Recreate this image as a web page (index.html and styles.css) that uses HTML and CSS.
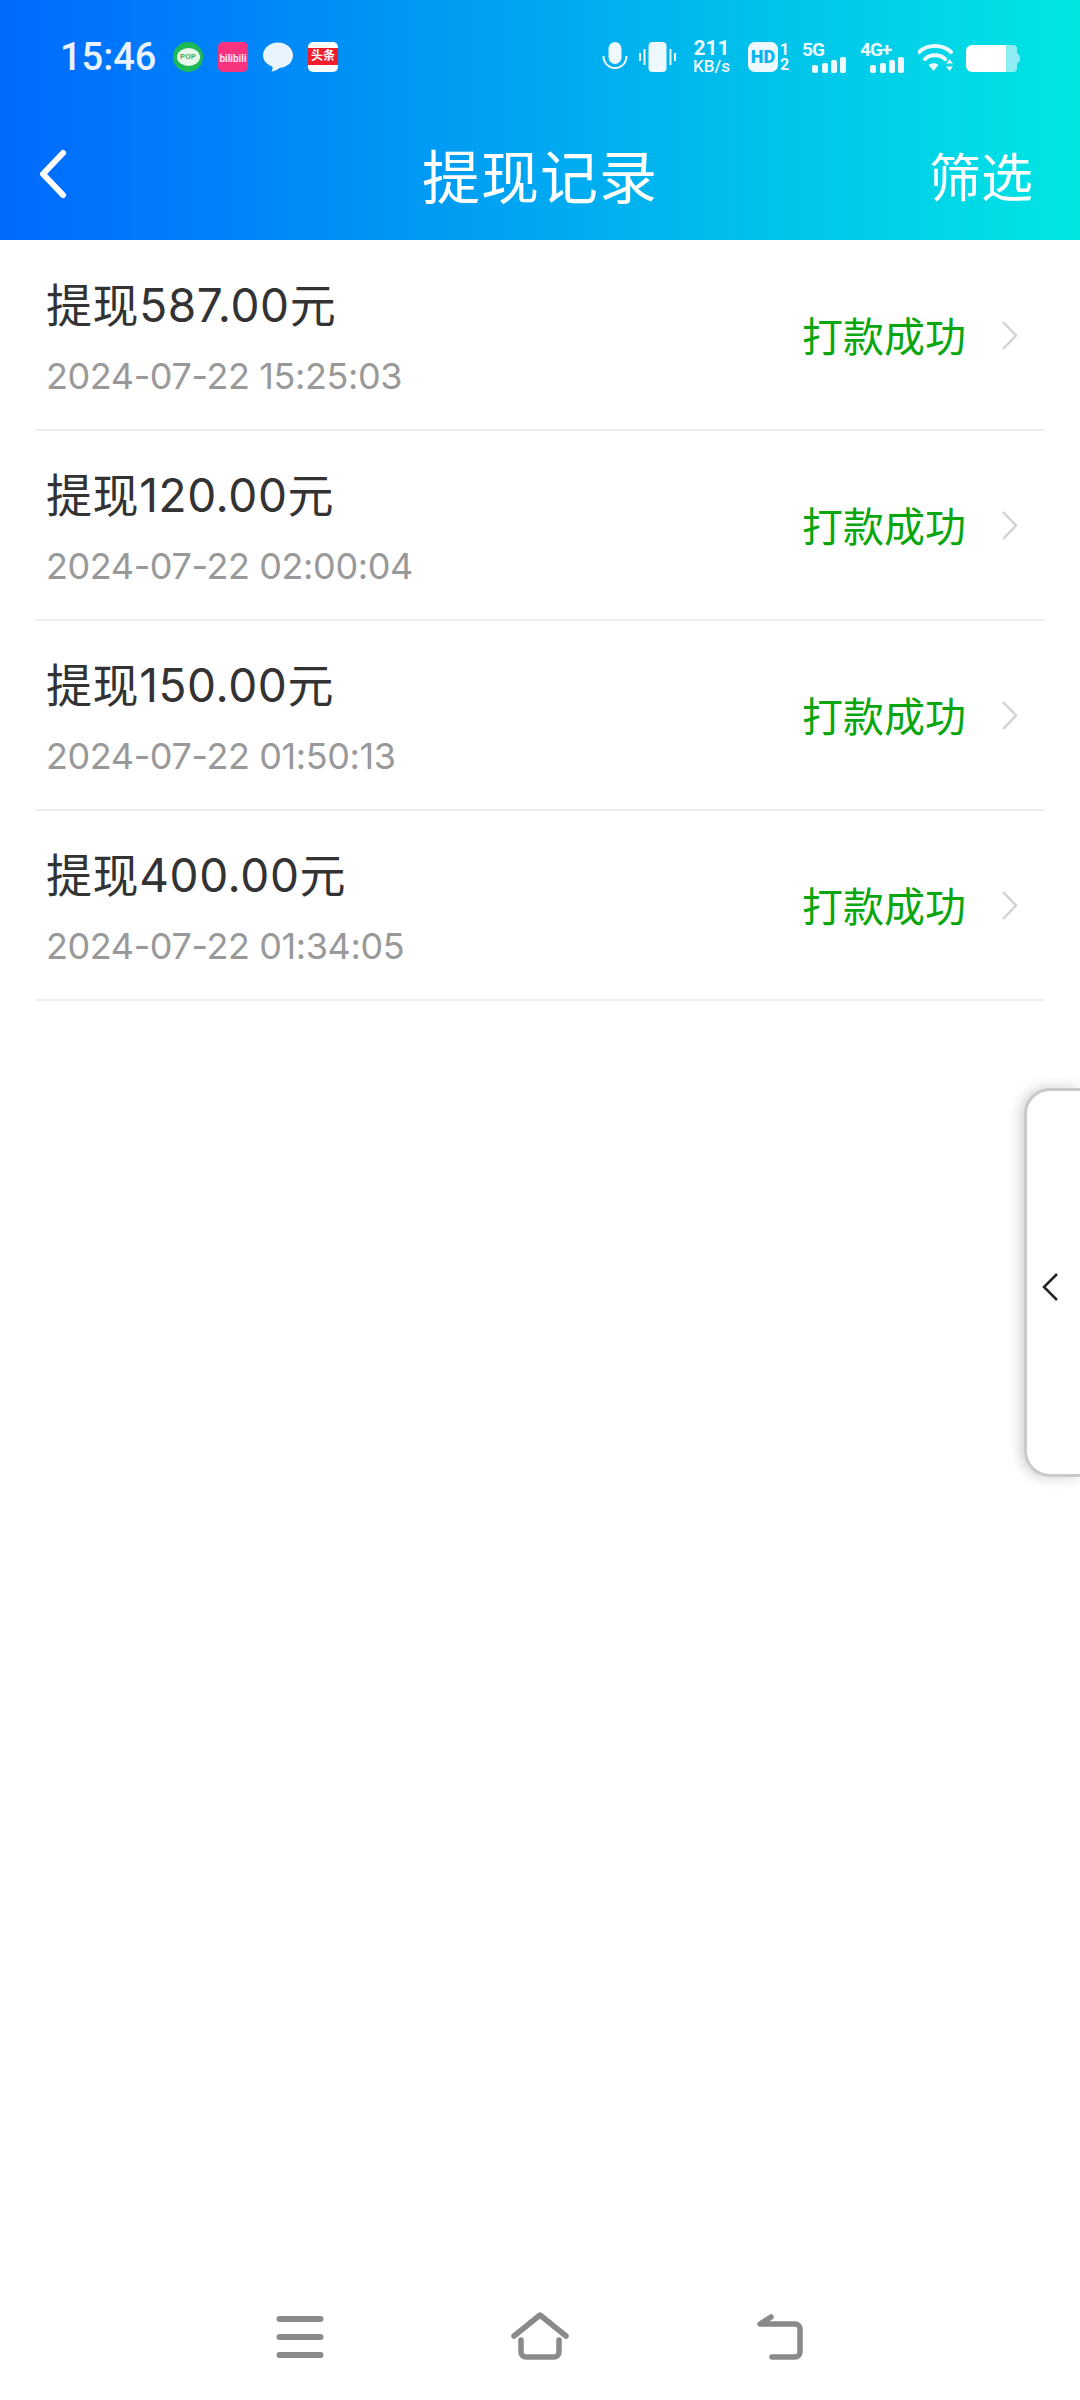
FILE: index.html
```html
<!DOCTYPE html>
<html lang="zh-CN">
<head>
  <meta charset="UTF-8">
  <meta name="viewport" content="width=device-width, initial-scale=1.0">
  <title>提现记录</title>
  <link rel="stylesheet" href="styles.css">
</head>
<body>
  <div class="page">
    <header class="top">
      <!-- Status bar -->
      <div class="status-bar">
        <div class="status-left">
          <span class="clock">15:46</span>
          <div class="notify-icons">
            <div class="notify pop-icon"><span>POP</span></div>
            <div class="notify bili-icon"><span>bilibili</span></div>
            <svg class="notify" viewBox="0 0 30 30">
              <path d="M15 0.500c8.300 0 15 5.700 15 13 0 7.100-6.400 12-13 12.200-2.500 2-5.500 3.300-8.500 4 .9-1.400 1.200-3 1-5C4 22.500 0 18.500 0 13.500 0 6.200 6.700 0.500 15 0.500z" fill="#e9f4ff"/>
            </svg>
            <div class="notify toutiao-icon"><span>头条</span></div>
          </div>
        </div>
        <div class="status-right">
          <svg class="ic-mic" viewBox="0 0 26 30">
            <rect x="6.500" y="0" width="13" height="22" rx="6.500" fill="#eef8ff"/>
            <path d="M1.500 14c0 7 5 12 11.500 12s11.500-5 11.500-12" fill="none" stroke="#eef8ff" stroke-width="2"/>
          </svg>
          <svg class="ic-vibrate" viewBox="0 0 37 30">
            <rect x="9.500" y="0" width="18" height="30" rx="4" fill="#eef8ff"/>
            <path d="M5.500 7v16M1 11v8M31.500 7v16M36 11v8" stroke="#eef8ff" stroke-width="2"/>
          </svg>
          <div class="net-speed">
            <span class="net-num">211</span>
            <span class="net-unit">KB/s</span>
          </div>
          <div class="hd-group">
            <span class="hd-badge">HD</span>
            <div class="sim-nums">
              <span>1</span>
              <span>2</span>
            </div>
          </div>
          <div class="signal">
            <span class="signal-label">5G</span>
            <svg class="signal-bars" viewBox="0 0 44 16">
              <rect x="10" y="8" width="6" height="8" rx="2"/>
              <rect x="20" y="6" width="6" height="10" rx="2"/>
              <rect x="29" y="3" width="6" height="13" rx="2"/>
              <rect x="38" y="0" width="6" height="16" rx="2"/>
            </svg>
          </div>
          <div class="signal">
            <span class="signal-label">4G+</span>
            <svg class="signal-bars" viewBox="0 0 44 16">
              <rect x="10" y="8" width="6" height="8" rx="2"/>
              <rect x="20" y="6" width="6" height="10" rx="2"/>
              <rect x="29" y="3" width="6" height="13" rx="2"/>
              <rect x="38" y="0" width="6" height="16" rx="2"/>
            </svg>
          </div>
          <svg class="ic-wifi" viewBox="0 0 36 30">
            <path d="M2 10c8.500-8 23.500-8 32 0M8 17c5-5 15-5 20 0" fill="none" stroke="#eef8ff" stroke-width="4" stroke-linecap="round" transform="translate(-1 0)"/>
            <path d="M10.500 23c3-2.500 7.500-2.500 10 0L15.500 29z" fill="#eef8ff"/>
            <path d="M31.500 17l3.500 4.500h-7zM31.500 29L28 24.500h7z" fill="#eef8ff"/>
          </svg>
          <svg class="ic-battery" viewBox="0 0 54 27">
            <path d="M40 0h7a4 4 0 0 1 4 4v4.500c1.800.4 3 2 3 5s-1.200 4.600-3 5V23a4 4 0 0 1-4 4h-7z" fill="#8feef5"/>
            <path d="M6 0h34v27H6a6 6 0 0 1-6-6V6a6 6 0 0 1 6-6z" fill="#fff"/>
          </svg>
        </div>
      </div>

      <!-- Title bar -->
      <div class="toolbar">
        <svg class="back-btn" viewBox="0 0 30 50">
          <path d="M25 4L5 25l20 21" fill="none" stroke="#fff" stroke-width="6" stroke-linecap="round" stroke-linejoin="round"/>
        </svg>
        <h1 class="toolbar-title">提现记录</h1>
        <span class="toolbar-action">筛选</span>
      </div>
    </header>

    <main class="record-list">
      <div class="record">
        <div class="record-info">
          <div class="record-title">提现587.00元</div>
          <div class="record-time">2024-07-22 15:25:03</div>
        </div>
        <span class="record-status">打款成功</span>
        <svg class="record-arrow" viewBox="0 0 17 31"><path d="M2 2l13 13.500L2 29" fill="none" stroke="#d2d2d2" stroke-width="2.500"/></svg>
      </div>
      <div class="record">
        <div class="record-info">
          <div class="record-title">提现120.00元</div>
          <div class="record-time">2024-07-22 02:00:04</div>
        </div>
        <span class="record-status">打款成功</span>
        <svg class="record-arrow" viewBox="0 0 17 31"><path d="M2 2l13 13.500L2 29" fill="none" stroke="#d2d2d2" stroke-width="2.500"/></svg>
      </div>
      <div class="record">
        <div class="record-info">
          <div class="record-title">提现150.00元</div>
          <div class="record-time">2024-07-22 01:50:13</div>
        </div>
        <span class="record-status">打款成功</span>
        <svg class="record-arrow" viewBox="0 0 17 31"><path d="M2 2l13 13.500L2 29" fill="none" stroke="#d2d2d2" stroke-width="2.500"/></svg>
      </div>
      <div class="record">
        <div class="record-info">
          <div class="record-title">提现400.00元</div>
          <div class="record-time">2024-07-22 01:34:05</div>
        </div>
        <span class="record-status">打款成功</span>
        <svg class="record-arrow" viewBox="0 0 17 31"><path d="M2 2l13 13.500L2 29" fill="none" stroke="#d2d2d2" stroke-width="2.500"/></svg>
      </div>
    </main>

    <!-- Bottom navigation -->
    <nav class="nav-bar">
      <svg class="nav-icon" viewBox="0 0 60 50">
        <path d="M9.500 7h41M9.500 25h41M9.500 43h41" stroke="#8a8a8a" stroke-width="6" stroke-linecap="round"/>
      </svg>
      <svg class="nav-icon" viewBox="0 0 60 50">
        <path d="M4 24L30 3l26 21" fill="none" stroke="#8a8a8a" stroke-width="5.500" stroke-linecap="round" stroke-linejoin="round"/>
        <path d="M11 28v12a5 5 0 0 0 5 5h28a5 5 0 0 0 5-5V28" fill="none" stroke="#8a8a8a" stroke-width="5.500" stroke-linecap="round"/>
      </svg>
      <svg class="nav-icon" viewBox="0 0 60 50">
        <path d="M21 5l-11 7h35a5 5 0 0 1 5 5v23a5 5 0 0 1-5 5H22" fill="none" stroke="#8a8a8a" stroke-width="5.500" stroke-linecap="round" stroke-linejoin="round"/>
      </svg>
    </nav>
  </div>

  <!-- Floating side drawer -->
  <div class="side-drawer">
    <svg class="side-arrow" viewBox="0 0 17 30">
      <path d="M15 2L2 15l13 13" fill="none" stroke="#222" stroke-width="2.500"/>
    </svg>
  </div>
</body>
</html>
```

FILE: styles.css
```css
/* General Styling */
body {
  margin: 0;
  padding: 0;
  background: #fff;
  font-family: "Roboto", "Noto Sans CJK SC", sans-serif;
  overflow: hidden;
}

.page {
  width: 1080px;
  height: 2400px;
  display: flex;
  flex-direction: column;
}

/* Header */
.top {
  height: 240px;
  background: linear-gradient(90deg, #0069ff, #00e6e3);
  color: #fff;
  display: flex;
  flex-direction: column;
}

.status-bar {
  height: 114px;
  box-sizing: border-box;
  padding: 42px 60px 0 60px;
  display: flex;
  justify-content: space-between;
  align-items: flex-start;
}

.status-left {
  display: flex;
  align-items: center;
  height: 30px;
}

.clock {
  font-size: 38px;
  font-weight: 500;
  color: #e8f3ff;
  width: 113px;
  line-height: 30px;
}

.notify-icons {
  display: flex;
  gap: 15px;
}

.notify {
  width: 30px;
  height: 30px;
  display: flex;
  align-items: center;
  justify-content: center;
  overflow: hidden;
}

.pop-icon {
  box-sizing: border-box;
  border-radius: 50%;
  background: #1db954;
}

.pop-icon span {
  width: 23px;
  height: 18px;
  border-radius: 50%;
  background: #e9f6ea;
  color: #45b45c;
  font-size: 8px;
  font-weight: 700;
  line-height: 18px;
  text-align: center;
}

.bili-icon {
  border-radius: 5px;
  background: #f8337f;
  color: #ffe3ee;
  font-size: 10px;
  font-weight: 700;
  line-height: 14px;
  padding-top: 4px;
  box-sizing: border-box;
}

.toutiao-icon {
  border-radius: 5px;
  background: #fff;
}

.toutiao-icon span {
  width: 30px;
  height: 17px;
  margin-top: -2px;
  background: #f01d2c;
  color: #fff;
  font-size: 12px;
  font-weight: 700;
  line-height: 17px;
  text-align: center;
}

.status-right {
  display: flex;
  align-items: flex-start;
  height: 32px;
}

.ic-mic {
  width: 26px;
  height: 30px;
  margin-right: 11px;
}

.ic-vibrate {
  width: 37px;
  height: 30px;
  margin-right: 14px;
}

.net-speed {
  width: 43px;
  margin-right: 15px;
  margin-top: -3px;
  display: flex;
  flex-direction: column;
  align-items: center;
  color: #eef8ff;
}

.net-num {
  font-size: 21px;
  font-weight: 700;
  line-height: 18px;
}

.net-unit {
  font-size: 17px;
  font-weight: 500;
  line-height: 18px;
}

.hd-group {
  display: flex;
  margin-right: 11px;
}

.hd-badge {
  width: 30px;
  height: 30px;
  border-radius: 7px;
  background: #eef8ff;
  color: #08b4f2;
  font-size: 18px;
  font-weight: 900;
  line-height: 30px;
  text-align: center;
}

.sim-nums {
  width: 13px;
  display: flex;
  flex-direction: column;
  align-items: center;
  color: #eef8ff;
  font-size: 16px;
  font-weight: 700;
  line-height: 15px;
}

.signal {
  width: 44px;
  margin-right: 14px;
  display: flex;
  flex-direction: column;
  color: #eef8ff;
}

.signal-label {
  height: 15px;
  font-size: 19px;
  font-weight: 700;
  line-height: 15px;
  letter-spacing: -1px;
}

.signal-bars {
  width: 44px;
  height: 16px;
  fill: #eef8ff;
}

.ic-wifi {
  width: 36px;
  height: 30px;
  margin-right: 12px;
}

.ic-battery {
  width: 54px;
  height: 27px;
  margin-top: 3px;
}

/* Title bar */
.toolbar {
  flex: 1;
  display: grid;
  grid-template-columns: 1fr auto 1fr;
  align-items: center;
  padding: 0 47px 6px;
}

.back-btn {
  width: 30px;
  height: 50px;
  margin-left: -9px;
}

.toolbar-title {
  margin: 0;
  font-size: 58px;
  font-weight: 400;
  letter-spacing: 1px;
}

.toolbar-action {
  justify-self: end;
  font-size: 52px;
}

/* Record list */
.record-list {
  flex: 1;
  padding: 1px 36px 0;
}

.record {
  height: 190px;
  box-sizing: border-box;
  border-bottom: 2px solid #eeeeee;
  padding: 0 26px 0 10px;
  display: flex;
  align-items: center;
}

.record-info {
  flex: 1;
  display: flex;
  flex-direction: column;
  gap: 18px;
  padding-top: 8px;
  font-family: "Inter", "Noto Sans CJK SC", sans-serif;
}

.record-title {
  font-size: 46px;
  line-height: 56px;
  letter-spacing: 0.6px;
  color: #333;
}

.record-time {
  font-size: 36px;
  line-height: 50px;
  letter-spacing: -0.4px;
  color: #999;
}

.record-status {
  font-size: 41px;
  color: #0aa60f;
  margin-right: 35px;
  margin-bottom: 2px;
}

.record-arrow {
  width: 17px;
  height: 31px;
}

/* Bottom navigation */
.nav-bar {
  height: 90px;
  margin-bottom: 18px;
  display: flex;
  justify-content: center;
  align-items: center;
  gap: 180px;
}

.nav-icon {
  width: 60px;
  height: 50px;
}

/* Side drawer */
.side-drawer {
  position: absolute;
  top: 1088px;
  right: 0;
  width: 56px;
  height: 389px;
  box-sizing: border-box;
  background: #fff;
  border: 3px solid #cacaca;
  border-right: none;
  border-radius: 26px 0 0 26px;
  box-shadow: -3px 0 14px rgba(0, 0, 0, 0.2);
  display: flex;
  align-items: center;
}

.side-arrow {
  width: 17px;
  height: 30px;
  margin-left: 15px;
  margin-top: 8px;
}
```
